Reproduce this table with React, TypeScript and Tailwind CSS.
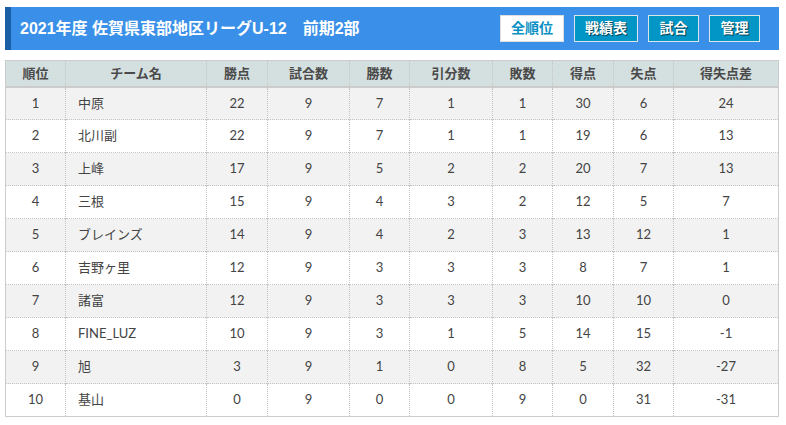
import React from 'react';

type Row = [number, string, number, number, number, number, number, number, number, number];

const ROWS: Row[] = [
  [1, '中原', 22, 9, 7, 1, 1, 30, 6, 24],
  [2, '北川副', 22, 9, 7, 1, 1, 19, 6, 13],
  [3, '上峰', 17, 9, 5, 2, 2, 20, 7, 13],
  [4, '三根', 15, 9, 4, 3, 2, 12, 5, 7],
  [5, 'ブレインズ', 14, 9, 4, 2, 3, 13, 12, 1],
  [6, '吉野ヶ里', 12, 9, 3, 3, 3, 8, 7, 1],
  [7, '諸富', 12, 9, 3, 3, 3, 10, 10, 0],
  [8, 'FINE_LUZ', 10, 9, 3, 1, 5, 14, 15, -1],
  [9, '旭', 3, 9, 1, 0, 8, 5, 32, -27],
  [10, '基山', 0, 9, 0, 0, 9, 0, 31, -31],
];

const COLS = [
  { label: '順位', w: 'w-[60px]' },
  { label: 'チーム名', w: 'w-[141px]' },
  { label: '勝点', w: 'w-[61px]' },
  { label: '試合数', w: 'w-[82px]' },
  { label: '勝数', w: 'w-[60px]' },
  { label: '引分数', w: 'w-[83px]' },
  { label: '敗数', w: 'w-[60px]' },
  { label: '得点', w: 'w-[61px]' },
  { label: '失点', w: 'w-[60px]' },
  { label: '得失点差', w: 'w-[105px]' },
];

const NavButton: React.FC<{ label: string; active?: boolean; width: string }> = ({ label, active, width }) => (
  <button
    className={
      active
        ? `${width} h-[27px] bg-white border border-[#dddddd] text-[#0a8fc4] text-[14px] font-bold`
        : `${width} h-[27px] bg-[#0296c6] border border-[#d8e6ea] text-white text-[14px] font-bold [text-shadow:1px_1px_1px_rgba(0,0,0,0.6)]`
    }
  >
    {label}
  </button>
);

export default function App() {
  return (
    <div className="w-[786px] h-[425px] bg-white pt-[7px] px-[5px] font-['Liberation_Sans','Noto_Sans_CJK_JP',sans-serif]">
      <div className="w-[774px] h-[43px] flex items-center bg-[#3a90e8] border-l-[6px] border-[#1a5ea8]">
        <h1 className="flex-1 pl-[9px] text-white text-[16px] font-bold">
          2021年度 佐賀県東部地区リーグU-12　前期2部
        </h1>
        <div className="flex gap-[10px] pr-[19px]">
          <NavButton label="全順位" active width="w-[64px]" />
          <NavButton label="戦績表" width="w-[64px]" />
          <NavButton label="試合" width="w-[51px]" />
          <NavButton label="管理" width="w-[51px]" />
        </div>
      </div>

      <table className="mt-[10px] w-[774px] table-fixed border-collapse border border-[#cccccc] text-[13px] text-[#444444] font-['Lato','Noto_Sans_CJK_JP',sans-serif]">
        <thead>
          <tr className="h-[26px] bg-[#d4dfdf] border-b-2 border-[#cccccc]">
            {COLS.map((c, i) => (
              <th
                key={c.label}
                className={`${c.w} font-bold text-[#4a4a4a] text-center ${i > 0 ? 'border-l border-dotted border-l-[#c4c4c4]' : ''}`}
              >
                {c.label}
              </th>
            ))}
          </tr>
        </thead>
        <tbody>
          {ROWS.map((r, ri) => (
            <tr key={r[0]} className={`h-[33px] ${ri % 2 === 0 ? 'bg-[#f2f2f2]' : 'bg-white'} border-b border-dotted border-b-[#c4c4c4]`}>
              {r.map((v, i) => (
                <td
                  key={i}
                  className={`${i === 1 ? 'text-left pl-[12px]' : 'text-center'} ${i > 0 ? 'border-l border-dotted border-l-[#c4c4c4]' : ''}`}
                >
                  {v}
                </td>
              ))}
            </tr>
          ))}
        </tbody>
      </table>
    </div>
  );
}
